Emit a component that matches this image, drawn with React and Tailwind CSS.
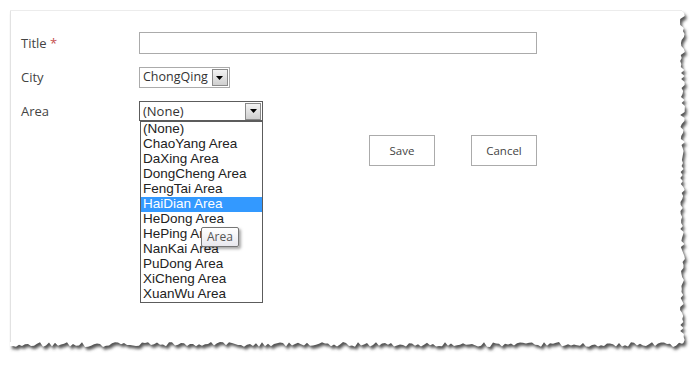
import React from "react";

function rng(seed) {
  let s = seed;
  return () => {
    s = (s * 16807) % 2147483647;
    return (s - 1) / 2147483646;
  };
}

function tornPoints(dx, dy, seed) {
  const r = rng(seed);
  const pts = [];
  pts.push([10 + dx, 10 + dy]);
  for (let y = 10; y <= 344; y += 3) {
    pts.push([682 + dx + (r() * 5 - 2), y + dy]);
  }
  for (let x = 682; x >= 10; x -= 3) {
    pts.push([x + dx, 344 + dy + (r() * 5 - 2)]);
  }
  pts.push([10 + dx, 344 + dy]);
  return pts.map((p) => p.join(",")).join(" ");
}

function Arrow({ className }) {
  return (
    <div
      className={
        "flex items-center justify-center border border-[#8a8a8a] bg-gradient-to-b from-[#f4f4f4] to-[#cfcfcf] " +
        className
      }
    >
      <svg width="7" height="4" viewBox="0 0 7 4">
        <polygon points="0,0 7,0 3.5,4" fill="#000" />
      </svg>
    </div>
  );
}

const areas = [
  "(None)",
  "ChaoYang Area",
  "DaXing Area",
  "DongCheng Area",
  "FengTai Area",
  "HaiDian Area",
  "HeDong Area",
  "HePing Area",
  "NanKai Area",
  "PuDong Area",
  "XiCheng Area",
  "XuanWu Area",
];

export default function App() {
  const shadow = tornPoints(2, 3, 12345);
  const paper = tornPoints(0, 0, 12345);
  return (
    <div className="relative w-[700px] h-[365px] bg-white overflow-hidden">
      <svg className="absolute inset-0" width="700" height="365">
        <defs>
          <filter id="blur" x="-5%" y="-5%" width="110%" height="110%">
            <feGaussianBlur stdDeviation="1.6" />
          </filter>
        </defs>
        <polygon points={shadow} fill="#555555" filter="url(#blur)" />
        <polygon points={paper} fill="#ffffff" />
        <line x1="10.5" y1="10" x2="10.5" y2="342" stroke="#e2e2e2" />
        <line x1="10" y1="10.5" x2="682" y2="10.5" stroke="#ececec" />
      </svg>

      <div
        className="relative pl-[21px] pt-[32px] text-[13px] text-[#444]"
        style={{ fontFamily: '"Open Sans", "Segoe UI", sans-serif' }}
      >
        <div className="grid grid-cols-[118px_398px] gap-y-[13px] items-center">
          <div className="leading-none">
            Title <span className="text-[#c65050]">*</span>
          </div>
          <div className="h-[22px] border border-[#ababab] bg-white" />

          <div className="leading-none">City</div>
          <div className="flex">
            <div className="flex h-[21px] items-center border border-[#ababab] bg-white pl-[3px] pr-[1px] gap-[4px]">
              <span className="text-[12.5px] text-[#333] leading-none">ChongQing</span>
              <Arrow className="w-[16px] h-[17px]" />
            </div>
          </div>

          <div className="leading-none">Area</div>
          <div className="relative">
            <div className="flex h-[20px] w-[124px] items-center justify-between border border-[#5c5c5c] bg-white pl-[3px] pr-[1px]">
              <span className="text-[13px] text-[#333] leading-none">(None)</span>
              <Arrow className="w-[16px] h-[17px]" />
            </div>
            <div
              className="absolute left-[1px] top-[20px] z-20 w-[123px] border border-[#5c5c5c] bg-white text-[13.5px] text-[#222]"
              style={{ fontFamily: '"Liberation Sans", Arial, sans-serif' }}
            >
              {areas.map((a, i) => (
                <div
                  key={a}
                  className={
                    "h-[15px] leading-[14px] pl-[2px] whitespace-nowrap " +
                    (i === 5 ? "bg-[#3399ff] text-white" : "")
                  }
                >
                  {a}
                </div>
              ))}
              <div
                className="absolute left-[60px] top-[105px] h-[20px] px-[5px] flex items-center border border-[#767676] rounded-[2px] bg-gradient-to-b from-white to-[#e8e8ee] text-[12px] text-[#555] shadow-[2px_2px_3px_rgba(0,0,0,0.35)]"
                style={{ fontFamily: '"Open Sans", "Segoe UI", sans-serif' }}
              >
                Area
              </div>
            </div>
          </div>

          <div />
          <div className="flex justify-end gap-[36px] mt-[1px]">
            <button className="w-[66px] h-[31px] border border-[#ababab] bg-white text-[11.5px] text-[#444]">
              Save
            </button>
            <button className="w-[66px] h-[31px] border border-[#ababab] bg-white text-[11.5px] text-[#444]">
              Cancel
            </button>
          </div>
        </div>
      </div>
    </div>
  );
}
